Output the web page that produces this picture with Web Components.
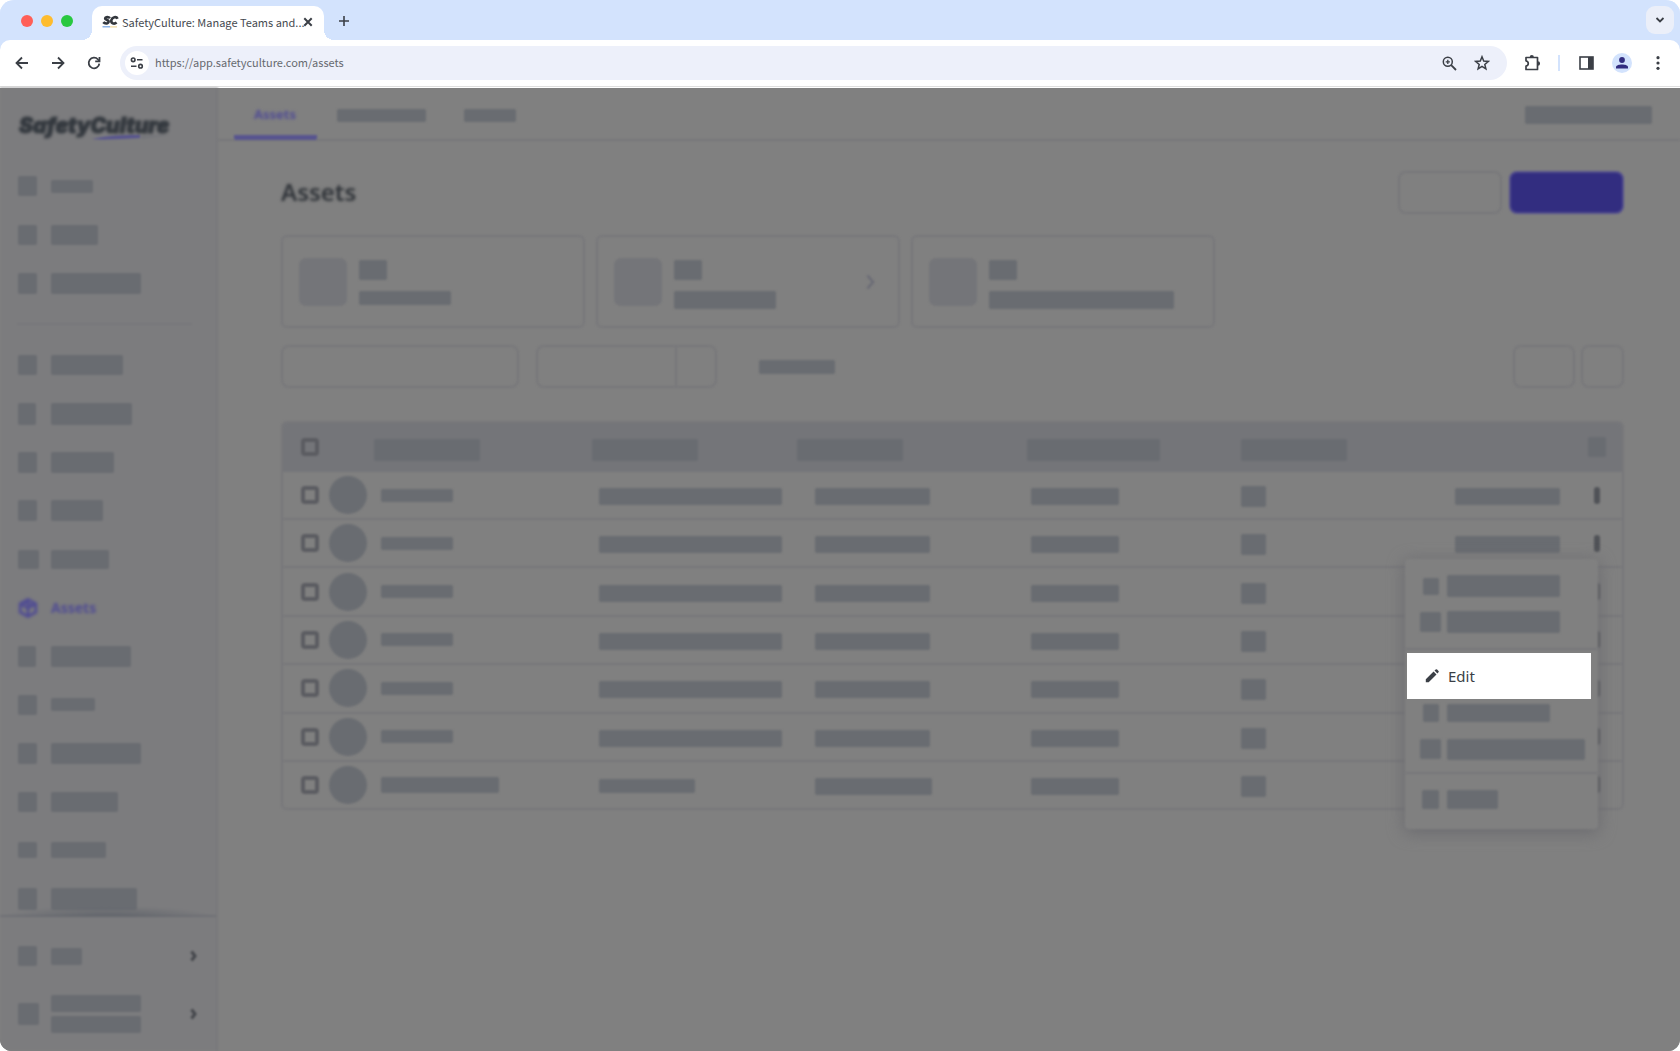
<!DOCTYPE html>
<html lang="en">
<head>
<meta charset="utf-8">
<title>SafetyCulture: Manage Teams and Assets</title>
<style>
  html, body { margin: 0; min-height: 100%; background: #fff; }
  body { font-family: "Noto Sans", sans-serif; color: #3b3f46; --line: #77777a; --block: #696c71; --purple: #57548f; }
</style>
</head>
<body>
<browser-window>
  <browser-tabs slot="chrome"></browser-tabs>
  <browser-toolbar slot="chrome"></browser-toolbar>
  <app-sidebar slot="side"></app-sidebar>
  <app-topbar slot="main"></app-topbar>
  <assets-page slot="main"></assets-page>
  <row-menu slot="menu"></row-menu>
</browser-window>

<script>
const define = (name, html, setup) => {
  const tpl = document.createElement('template');
  tpl.innerHTML = html;
  customElements.define(name, class extends HTMLElement {
    constructor() {
      super();
      this.attachShadow({ mode: 'open' }).appendChild(tpl.content.cloneNode(true));
    }
    connectedCallback() { if (setup) setup(this, this.shadowRoot); }
  });
};

/* Placeholder block: w, h and an optional corner radius r */
define('sk-bar', `
<style>
  :host { display: block; flex: none; width: var(--w); height: var(--h); border-radius: var(--r, 2px); background: var(--fill, var(--block)); }
</style>`, el => {
  for (const k of ['w', 'h', 'r']) if (el.hasAttribute(k)) el.style.setProperty('--' + k, el.getAttribute(k) + 'px');
});

define('browser-window', `
<style>
  :host { display: flex; flex-direction: column; min-height: 100vh; box-sizing: border-box; padding-top: 1px; border-radius: 14px 14px 12px 12px; overflow: hidden; background: linear-gradient(#d3e3fd 60px, #808080 60px); }
  .body { flex: 1; display: flex; position: relative; background: #808080; }
  .side { flex: none; display: flex; width: 218px; filter: blur(1px); }
  .main { flex: 1; min-width: 0; filter: blur(1px); }
</style>
<slot name="chrome"></slot>
<div class="body">
  <div class="side"><slot name="side"></slot></div>
  <div class="main"><slot name="main"></slot></div>
  <slot name="menu"></slot>
</div>`);

define('browser-tabs', `
<style>
  :host { display: flex; height: 39px; background: #d3e3fd; font-family: "Noto Sans CJK SC", sans-serif; }
  .lights { display: flex; gap: 8px; align-items: center; padding: 0 19px 0 21px; }
  .lights i { width: 12px; height: 12px; border-radius: 50%; background: #ff5f57; }
  .lights i:nth-child(2) { background: #febc2e; }
  .lights i:nth-child(3) { background: #28c840; }
  .tab { position: relative; display: flex; align-items: center; flex: none; width: 232px; box-sizing: border-box; margin-top: 5px; padding: 0 10px 3px; background: #fff; border-radius: 10px 10px 0 0; }
  .tab::before, .tab::after { content: ""; position: absolute; bottom: 0; width: 10px; height: 10px; }
  .tab::before { right: 100%; background: radial-gradient(circle at 0 0, transparent 10px, #fff 10px); }
  .tab::after { left: 100%; background: radial-gradient(circle at 100% 0, transparent 10px, #fff 10px); }
  svg { flex: none; }
  .tab span { flex: 1; min-width: 0; font-size: 11px; line-height: 18px; color: #45494f; white-space: nowrap; margin-left: 3px; }
  button { display: flex; flex: none; align-items: center; justify-content: center; border: 0; padding: 0; background: none; color: #3b3f46; }
  .x { width: 12px; height: 16px; }
  .plus { width: 20px; margin-left: 10px; }
  .more { width: 28px; height: 28px; margin: 5px 6px 0 auto; border-radius: 9px; background: #ebeff9; }
</style>
<div class="lights"><i></i><i></i><i></i></div>
<div class="tab">
  <svg width="17" height="14" viewBox="0 0 17 14" fill="none" stroke="#33373d" stroke-width="2.600"><path d="M8 3.200C6.500 1.500 3.400 1.700 3.100 3.300C2.800 5 7 4.600 6.600 6.900C6.300 8.800 2.800 9 1.300 7.200M15.600 3.700C14.300 1 10.200 1.900 9.400 5C8.700 8.300 12 9.800 14.600 7.600"/><path d="M.5 11.800H8" stroke="#8db4e8" stroke-width="1.600"/><path d="M8 11.800H15" stroke="#f0d9a0" stroke-width="1.200"/></svg>
  <span>SafetyCulture: Manage Teams and...</span>
  <button class="x" aria-label="Close tab"><svg width="10" height="10" viewBox="0 0 10 10" stroke="currentColor" stroke-width="2"><path d="M1.300 1.300 8.700 8.700M8.700 1.300 1.300 8.700"/></svg></button>
</div>
<button class="plus" aria-label="New tab"><svg width="12" height="12" viewBox="0 0 12 12" stroke="currentColor" stroke-width="1.600"><path d="M6 1V11M1 6H11"/></svg></button>
<button class="more" aria-label="Search tabs"><svg width="10" height="8" viewBox="0 0 10 8" fill="none" stroke="currentColor" stroke-width="1.800"><path d="M1.500 2 5 5.500 8.500 2"/></svg></button>`);

define('browser-toolbar', `
<style>
  :host { display: flex; align-items: center; height: 48px; box-sizing: border-box; padding: 0 12px 1px; background: #fff; border-radius: 10px 10px 0 0; border-bottom: 1px solid #fff; box-shadow: inset 0 -1px #dfdfdf; color: #3b3f46; }
  button { display: flex; align-items: center; justify-content: center; flex: none; width: 20px; height: 24px; border: 0; padding: 0; background: none; color: inherit; }
  .nav { display: flex; gap: 16px; }
  .omni { flex: 1; display: flex; align-items: center; height: 34px; margin: 0 16px; padding: 0 15px 0 5px; border-radius: 17px; background: #edf0fa; }
  .omni .site { width: 24px; border-radius: 50%; background: #fff; }
  input { flex: 1; min-width: 0; border: 0; padding: 0 0 2px; margin-left: 6px; background: none; outline: 0; font: 11px/20px "Noto Sans CJK SC", sans-serif; color: #66696e; }
  .omni button + button { margin-left: 13px; }
  .right { display: flex; align-items: center; }
  .sep { width: 2px; height: 16px; background: #d3e3fd; margin: 0 16px 0 15px; }
  .me { height: 20px; margin: 0 16px; border-radius: 50%; background: #d3e3fd; }
</style>
<div class="nav">
  <button aria-label="Back"><svg width="14" height="14" viewBox="0 0 14 14" fill="none" stroke="currentColor" stroke-width="1.800"><path d="M13 7H2M7 1.500 1.500 7 7 12.500"/></svg></button>
  <button aria-label="Forward"><svg width="14" height="14" viewBox="0 0 14 14" fill="none" stroke="currentColor" stroke-width="1.800"><path d="M1 7H12M7 1.500 12.500 7 7 12.500"/></svg></button>
  <button aria-label="Reload"><svg width="14" height="14" viewBox="0 0 14 14" fill="none" stroke="currentColor" stroke-width="1.800"><path d="M12.300 7.600A5.300 5.300 0 1 1 11 3.500L12.400 5"/><path d="M12.500 1V5.400H8.200"/></svg></button>
</div>
<div class="omni">
  <button class="site" aria-label="Site settings"><svg width="14" height="12" viewBox="0 0 14 12" fill="none" stroke="currentColor" stroke-width="1.600"><circle cx="3.200" cy="2.800" r="1.800"/><path d="M7 2.800H12.500M1 9.200H6.500"/><circle cx="10.500" cy="9.200" r="1.800"/></svg></button>
  <input aria-label="Address" value="https://app.safetyculture.com/assets">
  <button aria-label="Zoom"><svg width="15" height="15" viewBox="0 0 15 15" fill="none" stroke="currentColor" stroke-width="1.500"><circle cx="5.800" cy="5.800" r="4.500"/><path d="M9.200 9.200 14 14" stroke-width="1.800"/><path d="M5.800 3.700V7.900M3.700 5.800H7.900" stroke-width="1.300"/></svg></button>
  <button aria-label="Bookmark"><svg width="16" height="16" viewBox="0 0 16 16" fill="none" stroke="currentColor" stroke-width="1.500"><path d="M8 1.800 9.700 6.100 14.300 6.400 10.800 9.400 11.900 13.900 8 11.400 4.100 13.900 5.200 9.400 1.700 6.400 6.300 6.100Z"/></svg></button>
</div>
<div class="right">
  <button aria-label="Extensions"><svg width="18" height="18" viewBox="0 0 18 18"><path d="M2 3.500H13.500V15.500H2V12.200C5 11.600 5 7.400 2 6.800Z" fill="none" stroke="currentColor" stroke-width="1.700" stroke-linejoin="round"/><path d="M5.700 3.200A2.100 2.300 0 0 1 9.900 3.200ZM13.800 7.300A2.300 2.200 0 0 1 13.800 11.700Z" fill="currentColor"/></svg></button>
  <div class="sep"></div>
  <button aria-label="Side panel"><svg width="15" height="14" viewBox="0 0 15 14"><rect x="1" y="1" width="13" height="12" fill="none" stroke="currentColor" stroke-width="1.600"/><path d="M9 1H14V13H9Z" fill="currentColor"/></svg></button>
  <button class="me" aria-label="Profile"><svg width="14" height="14" viewBox="0 0 14 14" fill="#322d80"><circle cx="7" cy="4" r="2.900"/><path d="M1 12.500V11C1 7.500 13 7.500 13 11V12.500Z"/></svg></button>
  <button aria-label="Browser menu"><svg width="4" height="14" viewBox="0 0 4 14" fill="currentColor"><circle cx="2" cy="1.700" r="1.600"/><circle cx="2" cy="7" r="1.600"/><circle cx="2" cy="12.300" r="1.600"/></svg></button>
</div>`);

/* Sidebar link: an icon slot, a label slot and an optional chevron */
define('nav-item', `
<style>
  :host { display: flex; }
  a { flex: 1; display: flex; align-items: center; padding: 0 19px 0 18px; text-decoration: none; color: inherit; }
  .ic { width: 33px; flex: none; display: flex; }
  .lb { flex: 1; display: flex; flex-direction: column; gap: 4px; }
  svg { display: none; }
  :host([more]) svg { display: block; }
</style>
<a href="#"><span class="ic"><slot name="icon"></slot></span><span class="lb"><slot></slot></span>
<svg width="7" height="12" viewBox="0 0 7 12" fill="none" stroke="#45474c" stroke-width="3"><path d="M1.500 1.500 5 6 1.500 10.500"/></svg></a>`);

define('app-sidebar', `
<style>
  :host { flex: 1; display: flex; flex-direction: column; background: #7c7c7e; border-right: 2px solid var(--line); box-sizing: border-box; }
  .logo { padding: 25px 0 0 19px; height: 49px; color: #34393f; }
  .logo b { display: block; font: italic 900 21px/26px Inter, sans-serif; -webkit-text-stroke: 1px; filter: blur(1px); }
  .logo svg { display: block; margin: -5px 0 0 73px; }
  nav { display: grid; grid-auto-rows: 1fr; }
  .top { height: 146px; }
  hr { flex: none; height: 2px; border: 0; margin: 15px 24px 16px 17px; background: var(--line); }
  .list { flex: 1; margin-bottom: -8px; }
  .foot { position: relative; height: 136px; flex: none; box-sizing: border-box; border-top: 2px solid #707176; background: #7c7c7e; padding: 10px 0 8px; }
  .foot::before { content: ""; position: absolute; left: 0; right: 0; bottom: 100%; height: 11px; background: radial-gradient(50% 100% at 50% 100%, #65686e 20%, transparent 100%); }
  .on { color: #504c93; font-weight: 700; font-size: 14px; line-height: 20px; filter: blur(1px); }
</style>
<div class="logo"><b>SafetyCulture</b><svg width="80" height="6" viewBox="0 0 80 6"><path d="M0 5C16 1 38 1 48 1V4C30 5 12 6 0 5Z" fill="#57548f"/><path d="M48 2 78 1 50 5Z" fill="#74757a"/></svg></div>
<nav class="top" aria-label="Primary"></nav>
<hr>
<nav class="list" aria-label="Modules"></nav>
<nav class="foot" aria-label="Account">
  <nav-item more><sk-bar slot="icon" w="19" h="20"></sk-bar><sk-bar w="31" h="17"></sk-bar></nav-item>
  <nav-item more><sk-bar slot="icon" w="21" h="22"></sk-bar><sk-bar w="90" h="17"></sk-bar><sk-bar w="90" h="17"></sk-bar></nav-item>
</nav>`, (el, root) => {
  const item = ([iw, ih, w, h]) => `<nav-item><sk-bar slot="icon" w="${iw}" h="${ih}"></sk-bar><sk-bar w="${w}" h="${h}"></sk-bar></nav-item>`;
  const cube = `<nav-item class="on"><svg slot="icon" width="20" height="20" viewBox="0 0 20 20" fill="none" stroke="currentColor" stroke-width="2.800" stroke-linejoin="round"><path d="M10 1.500 17.800 5.800V14.200L10 18.500 2.200 14.200V5.800ZM2.200 5.800 10 10 17.800 5.800M10 10V18.500M6 3.700 14 8"/></svg>Assets</nav-item>`;
  root.querySelector('.top').innerHTML = [[19,20,42,13],[19,20,47,20],[19,21,90,21]].map(item).join('');
  const rest = [[19,20,72,20],[18,22,81,22],[19,21,63,21],[19,21,52,21],[21,19,58,19],null,[18,21,80,21],[19,20,44,13],[19,21,90,21],[19,20,67,20],[19,16,55,16],[19,22,86,22]];
  root.querySelector('.list').innerHTML = rest.map(r => r ? item(r) : cube).join('');
});

define('app-topbar', `
<style>
  :host { display: flex; align-items: flex-start; height: 53px; box-sizing: border-box; border-bottom: 2px solid var(--line); padding: 0 28px 0 16px; }
  a { display: flex; align-items: center; justify-content: center; text-decoration: none; color: #504c93; font-weight: 700; font-size: 13px; line-height: 20px; height: 52px; box-sizing: border-box; padding: 2px 20px 0; }
  .on { width: 83px; padding: 5px 1px 0 0; border-bottom: 5px solid var(--purple); border-radius: 2px; }
  .on span { filter: blur(1px); }
  .user { margin: 18px 0 0 auto; }
  a + a + a { padding-left: 18px; }
</style>
<a class="on" href="#"><span>Assets</span></a>
<a href="#" aria-label="Types"><sk-bar w="89" h="13"></sk-bar></a>
<a href="#" aria-label="Sites"><sk-bar w="52" h="13"></sk-bar></a>
<sk-bar class="user" w="127" h="18"></sk-bar>`);

define('stat-card', `
<style>
  :host { display: flex; align-items: center; gap: 12px; flex: none; width: 304px; height: 93px; box-sizing: border-box; border: 2px solid var(--line); border-radius: 6px; padding: 0 23px 0 16px; }
  .tx { flex: 1; display: flex; flex-direction: column; gap: 11px; height: 48px; padding-top: 2px; box-sizing: border-box; }
  .tile { --fill: #747579; }
  svg { display: none; }
  :host([more]) svg { display: block; }
</style>
<sk-bar class="tile" w="48" h="48" r="7"></sk-bar>
<div class="tx"><sk-bar w="28" h="20"></sk-bar><slot></slot></div>
<svg width="9" height="16" viewBox="0 0 9 16" fill="none" stroke="#6a6b75" stroke-width="2.500"><path d="M1.500 1.500 7 8 1.500 14.500"/></svg>`);

define('assets-page', `
<style>
  :host { display: block; padding: 30px 56px 0 63px; }
  .head { display: flex; align-items: center; gap: 7px; height: 43px; }
  h1 { flex: 1; margin: 0; padding-bottom: 2px; font-size: 24px; line-height: 32px; font-weight: 600; color: #2f3338; filter: blur(1px); }
  button, input, select { appearance: none; box-sizing: border-box; height: 43px; margin: 0; border: 2px solid var(--line); border-radius: 8px; background: none; font: 14px "Noto Sans", sans-serif; }
  .ghost { width: 104px; }
  .primary { width: 115px; border-color: #524e8c; background: #322d80; }
  .cards { display: flex; gap: 11px; margin-top: 21px; }
  .tools { display: flex; align-items: center; margin-top: 17px; }
  .search { width: 238px; margin-right: 17px; }
  .split { display: flex; margin-right: 42px; }
  .split select { width: 141px; border-radius: 8px 0 0 8px; }
  .split button { width: 42px; margin-left: -2px; border-radius: 0 8px 8px 0; }
  .b1 { width: 62px; margin: 0 6px 0 auto; }
  .b2 { width: 43px; }
  asset-table { margin-top: 33px; }
</style>
<div class="head"><h1>Assets</h1><button class="ghost" aria-label="Import"></button><button class="primary" aria-label="Add asset"></button></div>
<div class="cards">
  <stat-card><sk-bar w="92" h="14"></sk-bar></stat-card>
  <stat-card more><sk-bar w="102" h="18"></sk-bar></stat-card>
  <stat-card><sk-bar w="185" h="18"></sk-bar></stat-card>
</div>
<div class="tools">
  <input class="search" type="text" aria-label="Search">
  <div class="split"><select aria-label="Filter"></select><button aria-label="Add filter"></button></div>
  <sk-bar w="76" h="14"></sk-bar>
  <button class="b1" aria-label="Columns"></button><button class="b2" aria-label="View"></button>
</div>
<asset-table></asset-table>`);

define('asset-table', `
<style>
  :host { display: block; box-sizing: border-box; border: 2px solid var(--line); border-radius: 6px; overflow: hidden; }
  table { width: 100%; height: 385px; table-layout: fixed; border-collapse: collapse; }
  th, td { padding: 0; text-align: left; vertical-align: middle; }
  thead tr { height: 49px; background: #747579; }
  th sk-bar { margin-top: 4px; }
  th:last-child sk-bar { margin-top: 0; }
  th:first-child, th:last-child { padding-bottom: 2px; }
  tbody tr + tr { border-top: 2px solid var(--line); }
  td:nth-child(n+3) sk-bar { margin-top: 3px; }
  th:first-child, td:first-child { padding-left: 18px; }
  th:nth-child(2) { padding-left: 46px; }
  td:nth-child(2) { padding-left: 1px; }
  td:nth-child(3) { padding-left: 7px; }
  td:nth-child(4) { padding-left: 18px; }
  td:nth-child(5) { padding-left: 4px; }
  td:last-child { padding-left: 6px; }
  input { appearance: none; display: block; box-sizing: border-box; width: 18px; height: 18px; margin: 0; border: 4px solid #5b5c61; border-radius: 4px; }
  .name { display: flex; align-items: center; gap: 14px; }
  .c0 { width: 45px } .c1 { width: 264px } .c2 { width: 205px } .c3 { width: 230px } .c4 { width: 214px } .c5 { width: 214px } .c7 { width: 34px }
  button { display: block; width: 6px; height: 17px; padding: 0; border: 0; border-radius: 3px; background: #505257; }
</style>
<table>
  <colgroup><col class="c0"><col class="c1"><col class="c2"><col class="c3"><col class="c4"><col class="c5"><col><col class="c7"></colgroup>
  <thead><tr>
    <th><input type="checkbox" aria-label="Select all"></th>
    <th><sk-bar w="106" h="22"></sk-bar></th><th><sk-bar w="106" h="22"></sk-bar></th><th><sk-bar w="106" h="22"></sk-bar></th>
    <th><sk-bar w="133" h="22"></sk-bar></th><th><sk-bar w="106" h="22"></sk-bar></th><th></th><th><sk-bar w="18" h="20"></sk-bar></th>
  </tr></thead>
  <tbody></tbody>
</table>`, (el, root) => {
  const row = (n, nh, a, ah, b) => `<tr><td><input type="checkbox" aria-label="Select row"></td>
    <td><div class="name"><sk-bar w="38" h="38" r="19"></sk-bar><sk-bar w="${n}" h="${nh}"></sk-bar></div></td>
    <td><sk-bar w="${a}" h="${ah}"></sk-bar></td><td><sk-bar w="${b}" h="17"></sk-bar></td><td><sk-bar w="88" h="17"></sk-bar></td>
    <td><sk-bar w="25" h="21"></sk-bar></td><td><sk-bar w="105" h="17"></sk-bar></td><td><button aria-label="Row actions"></button></td></tr>`;
  root.querySelector('tbody').innerHTML = row(72, 13, 183, 17, 115).repeat(6) + row(118, 16, 96, 14, 117);
});

define('menu-item', `
<style>
  :host { display: flex; }
  button { flex: 1; display: flex; align-items: center; border: 0; padding: 0; background: none; font: 15px/20px "Noto Sans", sans-serif; color: #3b3f46; text-align: left; }
  .ic { display: flex; justify-content: center; width: 21px; margin: 0 6px 0 var(--inset, 15px); }
</style>
<button role="menuitem"><span class="ic"><slot name="icon"></slot></span><slot></slot></button>`);

define('row-menu', `
<style>
  :host { position: absolute; z-index: 2; top: 471px; right: 82px; width: 193px; }
  .panel { position: relative; padding: 9px 0 4px; }
  .panel::before { content: ""; position: absolute; inset: 0; border-radius: 4px; background: #808080; box-shadow: 0 3px 16px 1px #6b6b6f; filter: blur(1px); }
  menu-item, hr { position: relative; }
  menu-item:not(.edit), hr { filter: blur(1px); }
  menu-item { height: 36px; }
  hr { height: 2px; margin: 0; border: 0; background: var(--line); }
  hr.a { margin: 8px 0 3px; }
  .edit { --inset: 14px; height: 46px; margin: 0 7px 0 2px; background: #fff; }
  .s { height: 27px; } .m { height: 46px; } .l { height: 51px; }
</style>
<div class="panel" role="menu">
  <menu-item><sk-bar slot="icon" w="16" h="17"></sk-bar><sk-bar w="113" h="22"></sk-bar></menu-item>
  <menu-item><sk-bar slot="icon" w="21" h="20"></sk-bar><sk-bar w="113" h="22"></sk-bar></menu-item>
  <hr class="a">
  <menu-item class="edit"><svg slot="icon" width="14" height="14" viewBox="0 0 14 14" fill="#3b3f46"><path d="M.8 10.300 8.600 2.500 11.500 5.400 3.700 13.200H.8ZM9.500 1.600 10.700.5Q11.400-.1 12.100.5L13.500 1.900Q14.100 2.600 13.500 3.300L12.400 4.500Z"/></svg>Edit</menu-item>
  <menu-item class="s"><sk-bar slot="icon" w="16" h="18"></sk-bar><sk-bar w="103" h="18"></sk-bar></menu-item>
  <menu-item class="m"><sk-bar slot="icon" w="21" h="20"></sk-bar><sk-bar w="138" h="21"></sk-bar></menu-item>
  <hr>
  <menu-item class="l"><sk-bar slot="icon" w="17" h="19"></sk-bar><sk-bar w="51" h="19"></sk-bar></menu-item>
</div>`);
</script>
</body>
</html>
